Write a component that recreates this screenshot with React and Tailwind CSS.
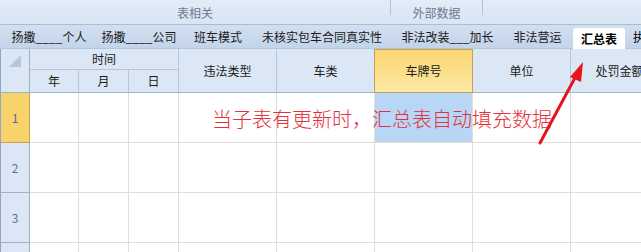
import React from 'react';

const cols = 'grid grid-cols-[30px_49px_50px_50px_98px_98px_98px_98px_98px] w-[669px]';
const font = { fontFamily: '"Noto Sans CJK SC", "Noto Sans", sans-serif' };

const tabs = [
  { label: '扬撒____个人', w: 'w-[90px]' },
  { label: '扬撒____公司', w: 'w-[90px]' },
  { label: '班车模式', w: 'w-[68px]' },
  { label: '未核实包车合同真实性', w: 'w-[140px]' },
  { label: '非法改装___加长', w: 'w-[111px]' },
  { label: '非法营运', w: 'w-[69px]' },
];

const headers = ['违法类型', '车类', '车牌号', '单位', '处罚金额'];

function Arrow() {
  return (
    <svg className="absolute left-0 top-0 pointer-events-none z-20" width="641" height="252">
      <line x1="540" y1="143" x2="577" y2="74" stroke="#e8141c" strokeWidth="3" strokeLinecap="round" />
      <polygon points="583,62 570,77 581,82" fill="#e8141c" />
    </svg>
  );
}

function BodyRow({ n, first }) {
  return (
    <div className={`${cols} h-[50px]`}>
      <div
        className={`flex items-center justify-center border-r border-b text-[12px] ${
          first ? 'bg-[#f8d36b] border-[#c9a24e] text-[#5b6b80]' : 'bg-[#dce6f4] border-[#9eb1c9] text-[#5a7398]'
        } border-l border-l-[#8fa6c4]`}
      >
        {n}
      </div>
      <div className="border-r border-b border-[#e2dfd2]" />
      <div className="border-r border-b border-[#e2dfd2]" />
      <div className="border-r border-b border-[#e2dfd2]" />
      <div className="border-r border-b border-[#e2dfd2] flex items-center">
        {first && (
          <span className="relative z-10 whitespace-nowrap pl-[33px] text-[20px] font-light leading-none text-[#e3303a] pt-[2px]">
            当子表有更新时，汇总表自动填充数据
          </span>
        )}
      </div>
      <div className="border-r border-b border-[#e2dfd2]" />
      <div className={`border-r border-b border-[#e2dfd2] ${first ? 'bg-[#b8d7f6]' : ''}`} />
      <div className="border-r border-b border-[#e2dfd2]" />
      <div className="border-r border-b border-[#e2dfd2]" />
    </div>
  );
}

export default function App() {
  return (
    <div className="relative w-[641px] h-[252px] overflow-hidden bg-white text-black" style={font}>
      {/* group labels */}
      <div className="flex h-[24px] bg-gradient-to-b from-[#e3ecf7] to-[#d9e5f3] text-[12px] text-[#6c7a8d]">
        <div className="w-[390px] shrink-0 flex items-center justify-center pt-[2px]">表相关</div>
        <div className="w-px h-[15px] shrink-0 bg-[#b3c2d5]" />
        <div className="w-[91px] shrink-0 flex items-center justify-center pt-[2px]">外部数据</div>
        <div className="w-px h-[15px] shrink-0 bg-[#b3c2d5]" />
        <div className="flex-1" />
      </div>

      {/* sheet tabs */}
      <div className="flex h-[25px] border-t border-b border-t-[#a8bcd5] border-b-[#b4c6dc] bg-gradient-to-b from-[#d2dfef] to-[#c3d4ea] pl-[4px] text-[12px]">
        {tabs.map((t) => (
          <div key={t.label} className={`${t.w} shrink-0 flex items-center justify-center whitespace-nowrap text-[#1a1a1a]`}>
            {t.label}
          </div>
        ))}
        <div className="ml-[1px] w-[52px] shrink-0 mt-[3px] h-[21px] bg-white rounded-t-[3px] flex items-center justify-center font-bold">
          汇总表
        </div>
        <div className="pl-[8px] shrink-0 flex items-center whitespace-nowrap">执行</div>
      </div>

      {/* column headers */}
      <div className={`${cols} grid-rows-[21px_23px] bg-[#dce7f5] text-[12px] text-[#1a1a1a]`}>
        <div className="row-span-2 border-r border-b border-[#9eb1c9] border-l border-l-[#8fa6c4] flex items-start justify-center pt-[6px]">
          <svg width="12" height="12" viewBox="0 0 12 12">
            <polygon points="12,0 12,12 0,12" fill="#b9c5d3" />
          </svg>
        </div>
        <div className="col-span-3 border-r border-b border-[#b4c6dc] flex items-center justify-center">时间</div>
        {headers.map((h) =>
          h === '车牌号' ? (
            <div
              key={h}
              className="row-span-2 border border-[#c3a258] -ml-px bg-gradient-to-b from-[#fad66f] to-[#fde8a5] flex items-center justify-center"
            >
              {h}
            </div>
          ) : (
            <div
              key={h}
              className="row-span-2 border-b border-[#9fb4cd] border-r border-r-[#b4c6dc] flex items-center justify-center"
            >
              {h}
            </div>
          )
        )}
        <div className="border-r border-b border-[#b4c6dc] border-b-[#9fb4cd] flex items-center justify-center">年</div>
        <div className="border-r border-b border-[#b4c6dc] border-b-[#9fb4cd] flex items-center justify-center">月</div>
        <div className="border-r border-b border-[#b4c6dc] border-b-[#9fb4cd] flex items-center justify-center">日</div>
      </div>

      <BodyRow n={1} first />
      <BodyRow n={2} />
      <BodyRow n={3} />
      <BodyRow n="" />

      <Arrow />
    </div>
  );
}
